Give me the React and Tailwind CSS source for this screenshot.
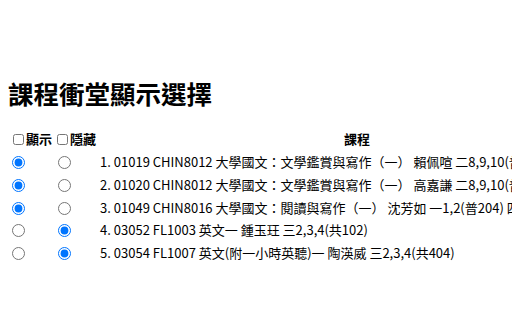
import { useState } from 'react';

const courses = [
  { id: 1, text: '1. 01019 CHIN8012 大學國文：文學鑑賞與寫作（一） 賴佩喧 二8,9,10(普203)', show: true },
  { id: 2, text: '2. 01020 CHIN8012 大學國文：文學鑑賞與寫作（一） 高嘉謙 二8,9,10(普204)', show: true },
  { id: 3, text: '3. 01049 CHIN8016 大學國文：閱讀與寫作（一） 沈芳如 一1,2(普204) 四5(普204)', show: true },
  { id: 4, text: '4. 03052 FL1003 英文一 鍾玉玨 三2,3,4(共102)', show: false },
  { id: 5, text: '5. 03054 FL1007 英文(附一小時英聽)一 陶渶威 三2,3,4(共404)', show: false },
];

export default function App() {
  const [picks, setPicks] = useState(() =>
    Object.fromEntries(courses.map((c) => [c.id, c.show ? 'show' : 'hide']))
  );

  const pick = (id, v) => setPicks((p) => ({ ...p, [id]: v }));

  return (
    <div
      className="w-[512px] h-[320px] overflow-hidden bg-white text-black text-[13px] leading-[1.45] pt-[75px] pl-[8px]"
      style={{ fontFamily: '"Noto Sans CJK TC", "Noto Sans", sans-serif' }}
    >
      <h1 className="text-[25.5px] font-bold mb-[15px] whitespace-nowrap">課程衝堂顯示選擇</h1>

      <table className="border-separate border-spacing-[2px] whitespace-nowrap">
        <thead>
          <tr>
            <th className="p-px w-[44px] text-left font-bold">
              <label className="flex items-center pl-[2px]">
                <input type="checkbox" className="m-0 mr-[2px] w-[11px] h-[11px]" />
                顯示
              </label>
            </th>
            <th className="p-px w-[40px] text-left font-bold">
              <label className="flex items-center pl-[1px]">
                <input type="checkbox" className="m-0 mr-[2px] w-[11px] h-[11px]" />
                隱藏
              </label>
            </th>
            <th className="p-px text-center font-bold">
              <div className="min-w-[514px]">課程</div>
            </th>
          </tr>
        </thead>
        <tbody>
          {courses.map((c) => (
            <tr key={c.id}>
              <td className="p-px">
                <input
                  type="radio"
                  name={`c${c.id}`}
                  checked={picks[c.id] === 'show'}
                  onChange={() => pick(c.id, 'show')}
                  className="m-0 ml-[1px] mt-[3px] align-top"
                />
              </td>
              <td className="p-px">
                <input
                  type="radio"
                  name={`c${c.id}`}
                  checked={picks[c.id] === 'hide'}
                  onChange={() => pick(c.id, 'hide')}
                  className="m-0 ml-[2px] mt-[3px] align-top"
                />
              </td>
              <td className="p-px">{c.text}</td>
            </tr>
          ))}
        </tbody>
      </table>
    </div>
  );
}
